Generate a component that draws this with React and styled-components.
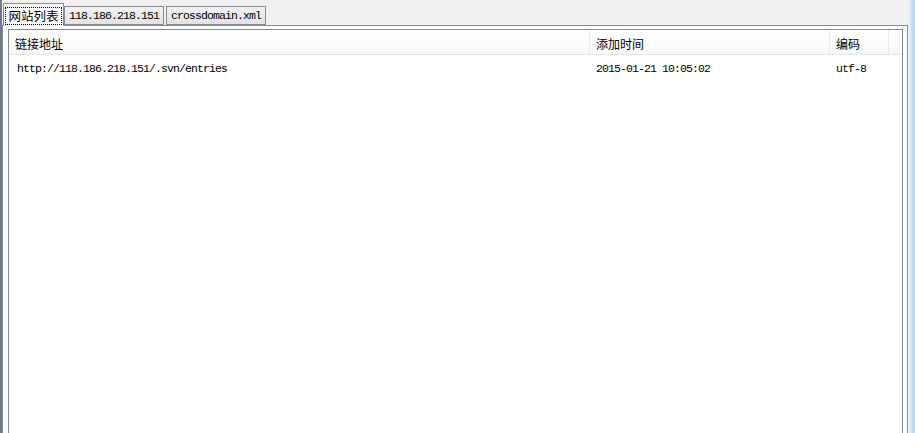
import styled, { createGlobalStyle } from "styled-components";

const GlobalStyle = createGlobalStyle`
  html, body {
    margin: 0;
    padding: 0;
    overflow: hidden;
  }
  body {
    font-family: "Noto Sans CJK SC", sans-serif;
    font-size: 12px;
    color: #000;
  }
`;

const Window = styled.div`
  width: 915px;
  height: 433px;
  display: flex;
  overflow: hidden;
`;

const LeftEdge = styled.div`
  width: 2px;
  background: #6f7c8d;
`;

const RightEdge = styled.div`
  width: 5px;
  background: linear-gradient(to right, #d8e6f5, #b9d4f0);
`;

const Body = styled.div`
  flex: 1;
  display: flex;
  flex-direction: column;
  background: #f0f0f0;
  padding: 3px 2px 0 0;
  min-width: 0;
`;

const TabStrip = styled.div`
  display: flex;
  align-items: flex-end;
  height: 22px;
  padding-left: 1px;
  position: relative;
  z-index: 1;
`;

const Tab = styled.div`
  box-sizing: border-box;
  display: flex;
  align-items: center;
  justify-content: center;
  border: 1px solid #898c95;
  border-bottom: ${(p) => (p.$active ? "none" : "1px solid #898c95")};
  height: ${(p) => (p.$active ? "23px" : "19px")};
  margin-bottom: ${(p) => (p.$active ? "-1px" : "0")};
  width: ${(p) => p.$width}px;
  margin-right: ${(p) => (p.$active ? "0" : "2px")};
  background: ${(p) =>
    p.$active ? "#ffffff" : "linear-gradient(to bottom, #f2f2f2, #e3e3e3)"};
  font-family: ${(p) =>
    p.$mono
      ? '"Liberation Mono", "Noto Sans CJK SC", monospace'
      : '"Noto Sans CJK SC", sans-serif'};
  font-size: ${(p) => (p.$mono ? "11.5px" : "12.5px")};
  letter-spacing: ${(p) => (p.$mono ? "-0.9px" : "0")};
  white-space: nowrap;
`;

const FocusRect = styled.span`
  border: 1px dotted #000;
  padding: 0 2px;
  line-height: 16px;
  margin-top: 1px;
`;

const Panel = styled.div`
  flex: 1;
  display: flex;
  border: 1px solid #898c95;
  border-bottom: none;
  background: #ffffff;
  padding: 3px 4px 0 5px;
  min-height: 0;
`;

const ListView = styled.div`
  flex: 1;
  border: 1px solid #828790;
  border-bottom: none;
  background: #ffffff;
  display: flex;
  flex-direction: column;
`;

const HeaderRow = styled.div`
  display: flex;
  height: 24px;
  border-bottom: 1px solid #e5e5e5;
  background: linear-gradient(to bottom, #ffffff, #f7f8f9);
`;

const HeaderCell = styled.div`
  box-sizing: border-box;
  width: ${(p) => p.$width}px;
  flex: ${(p) => (p.$fill ? 1 : "none")};
  border-right: ${(p) => (p.$fill ? "none" : "1px solid #e8e8e8")};
  padding-left: 6px;
  display: flex;
  align-items: center;
  padding-top: 2px;
  font-family: "Noto Sans CJK SC", sans-serif;
  font-size: 12px;
`;

const DataRow = styled.div`
  display: flex;
  height: 26px;
  align-items: center;
`;

const DataCell = styled.div`
  box-sizing: border-box;
  width: ${(p) => p.$width}px;
  padding-left: ${(p) => p.$pad}px;
  font-family: "Liberation Mono", monospace;
  font-size: 11.5px;
  letter-spacing: -0.9px;
  white-space: nowrap;
`;

const columns = [
  { title: "链接地址", width: 581 },
  { title: "添加时间", width: 240 },
  { title: "编码", width: 59 },
];

const rows = [["http://118.186.218.151/.svn/entries", "2015-01-21 10:05:02", "utf-8"]];

const App = () => (
  <>
    <GlobalStyle />
    <Window>
      <LeftEdge />
      <Body>
        <TabStrip>
          <Tab $active $width={61}>
            <FocusRect>网站列表</FocusRect>
          </Tab>
          <Tab $mono $width={100}>
            118.186.218.151
          </Tab>
          <Tab $mono $width={100}>
            crossdomain.xml
          </Tab>
        </TabStrip>
        <Panel>
          <ListView>
            <HeaderRow>
              {columns.map((c) => (
                <HeaderCell key={c.title} $width={c.width}>
                  {c.title}
                </HeaderCell>
              ))}
              <HeaderCell $fill />
            </HeaderRow>
            {rows.map((r) => (
              <DataRow key={r[0]}>
                {r.map((v, i) => (
                  <DataCell key={i} $width={columns[i].width} $pad={i === 0 ? 8 : 6}>
                    {v}
                  </DataCell>
                ))}
              </DataRow>
            ))}
          </ListView>
        </Panel>
      </Body>
      <RightEdge />
    </Window>
  </>
);

export default App;
